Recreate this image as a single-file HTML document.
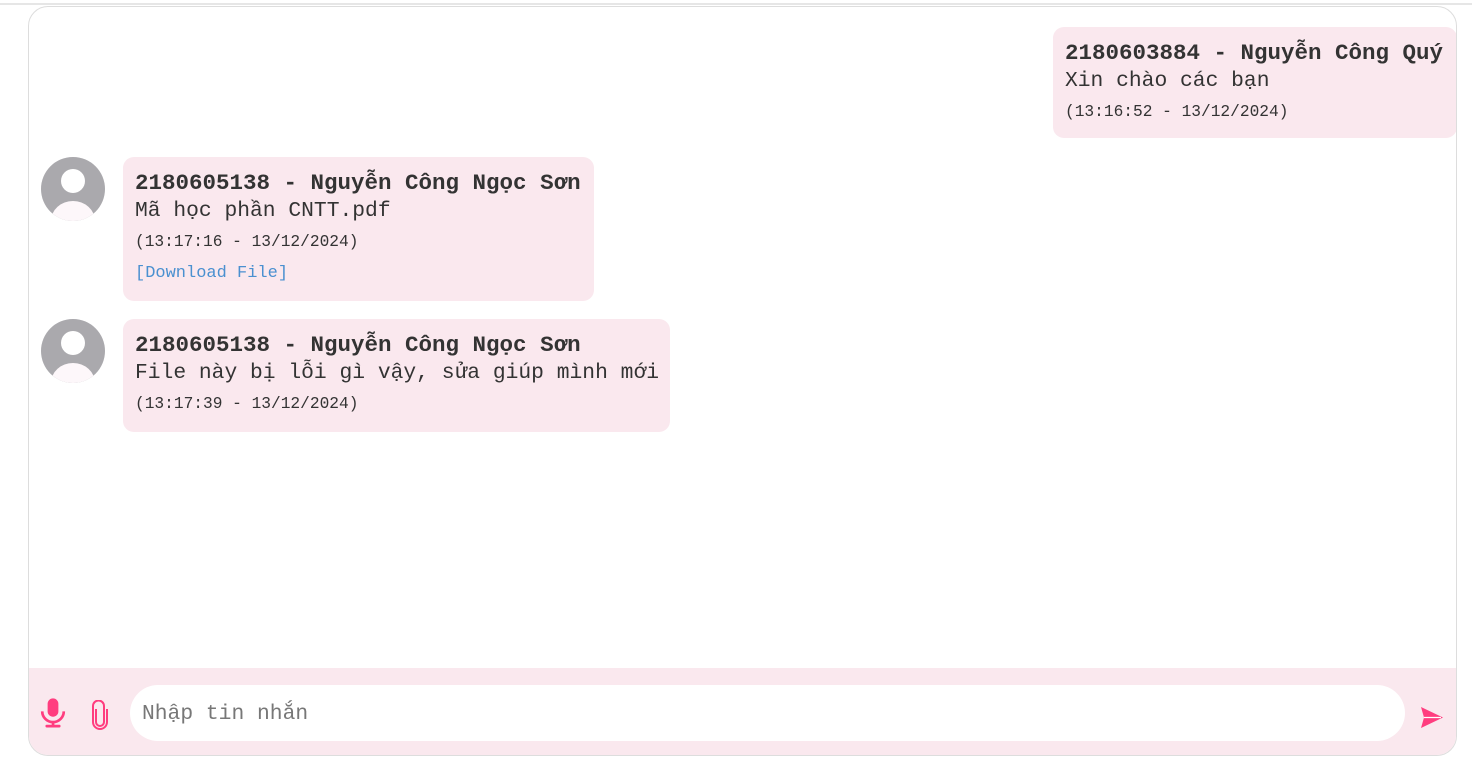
<!DOCTYPE html>
<html><head><meta charset="utf-8"><style>
*{box-sizing:border-box;margin:0;padding:0}
body{width:1472px;height:761px;background:#fff;position:relative;overflow:hidden;font-family:"Liberation Mono","DejaVu Sans Mono",monospace;color:#333}
.topline{position:absolute;left:0;top:3px;width:1472px;height:2px;background:#e6e6e6}
.box{position:absolute;left:28px;top:6px;width:1429px;height:750px;border:1px solid #ddd;border-radius:20px;overflow:hidden;background:#fff}
.b{position:absolute;background:#fae8ee;border-radius:11px;padding:12px 12px}
.n{font-weight:bold;font-size:22.5px;line-height:28px;white-space:nowrap}
.t{font-size:21.3px;line-height:28px;white-space:nowrap}
.ts{font-size:16.2px;line-height:20px;margin-top:7px;white-space:nowrap}
.dl{font-size:17px;color:#4a90d0;margin-top:12px;white-space:nowrap}
.av{position:absolute;width:64px;height:64px;border-radius:50%;background:#aaa9ad;overflow:hidden}
.av:before{content:"";position:absolute;left:20px;top:12px;width:24px;height:24px;border-radius:50%;background:#fff}
.av:after{content:"";position:absolute;left:10px;top:44px;width:44px;height:40px;border-radius:50%;background:#fdf7fa}
.bar{position:absolute;left:0;top:661px;width:100%;height:90px;background:#fae8ee}
.inp{position:absolute;left:101px;top:17px;width:1275px;height:56px;background:#fff;border-radius:28px;font-size:21.3px;color:#777;padding-left:12px;line-height:58px}
</style></head><body>
<div class="topline"></div>
<div class="box">
 <div class="b" style="left:1024px;top:20px;width:404px;height:111px"><div class="n">2180603884 - Nguyễn Công Quý</div><div class="t">Xin chào các bạn</div><div class="ts">(13:16:52 - 13/12/2024)</div></div>
 <div class="av" style="left:12px;top:150px"></div>
 <div class="b" style="left:94px;top:150px;width:471px;height:144px"><div class="n">2180605138 - Nguyễn Công Ngọc Sơn</div><div class="t">Mã học phần CNTT.pdf</div><div class="ts">(13:17:16 - 13/12/2024)</div><div class="dl">[Download File]</div></div>
 <div class="av" style="left:12px;top:312px"></div>
 <div class="b" style="left:94px;top:312px;width:547px;height:113px"><div class="n">2180605138 - Nguyễn Công Ngọc Sơn</div><div class="t">File này bị lỗi gì vậy, sửa giúp mình mới</div><div class="ts">(13:17:39 - 13/12/2024)</div></div>
 <div class="bar">
  <svg style="position:absolute;left:10px;top:30px" width="28" height="31" viewBox="0 0 26 28"><rect x="8" y="0" width="10" height="17" rx="5" fill="#ff3d7f"/><path d="M3 12a10 10 0 0 0 20 0" fill="none" stroke="#ff3d7f" stroke-width="2.5"/><rect x="11.8" y="21" width="2.5" height="4" fill="#ff3d7f"/><rect x="6" y="24.5" width="14" height="2.5" rx="1" fill="#ff3d7f"/></svg>
  <svg style="position:absolute;left:62px;top:32px" width="18" height="30" viewBox="0 0 18 30"><path d="M5 9v13a4 4 0 0 0 8 0V6a5.5 5.5 0 0 0-11 0v16a7 7 0 0 0 14 0V9" fill="none" stroke="#ff3d7f" stroke-width="2"/></svg>
  <div class="inp">Nhập tin nhắn</div>
  <svg style="position:absolute;left:1391px;top:38px" width="24" height="24" viewBox="0 0 24 24"><path d="M1 1L23 11.5L1 22L4 11.5Z" fill="#ff3d7f"/><path d="M4 11.5H21" stroke="#fff" stroke-width="1.2"/></svg>
 </div>
</div>
</body></html>
